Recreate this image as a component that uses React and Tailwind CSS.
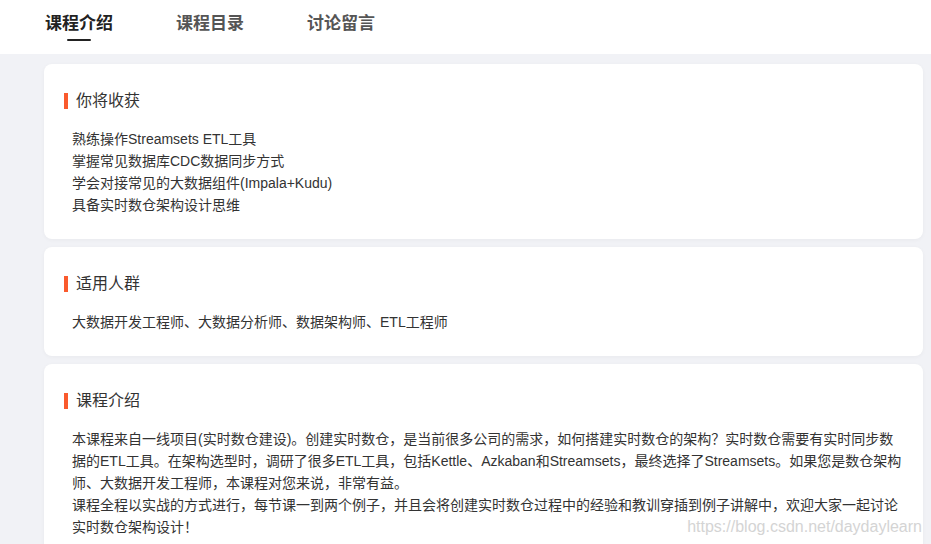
import React from 'react';

const tabs = ['课程介绍', '课程目录', '讨论留言'];

const gains = [
  '熟练操作Streamsets ETL工具',
  '掌握常见数据库CDC数据同步方式',
  '学会对接常见的大数据组件(Impala+Kudu)',
  '具备实时数仓架构设计思维',
];

const Section = ({ title, children }) => (
  <section className="bg-white rounded-lg pl-5 pr-5 pt-[26px] pb-[23px] shadow-[0_1px_4px_rgba(0,0,0,0.04)]">
    <div className="flex items-center h-[22px]">
      <span className="w-1 h-4 bg-[#fa5a2d]" />
      <h3 className="ml-2 text-[16px] leading-[22px] text-[#333]">{title}</h3>
    </div>
    <div className="mt-4 pl-2 text-[14px] leading-[22px] text-[#333]">{children}</div>
  </section>
);

export default function App() {
  return (
    <div
      className="relative h-[544px] overflow-hidden bg-[#f1f2f6]"
      style={{ fontFamily: '"Liberation Sans", "Noto Sans CJK SC", sans-serif' }}
    >
      <header className="h-[54px] bg-white flex items-start pl-[45px] gap-[63px]">
        {tabs.map((t, i) => (
          <div key={t} className="flex flex-col items-center pt-[13px]">
            <span className={`text-[17px] leading-[22px] font-bold ${i === 0 ? 'text-[#222]' : 'text-[#555]'}`}>{t}</span>
            {i === 0 && <span className="mt-[4px] w-6 h-[2px] bg-[#222] rounded" />}
          </div>
        ))}
      </header>

      <main className="pl-[44px] pr-[8px] pt-[10px] flex flex-col gap-2">
        <Section title="你将收获">
          {gains.map((g) => (
            <p key={g}>{g}</p>
          ))}
        </Section>
        <Section title="适用人群">
          <p>大数据开发工程师、大数据分析师、数据架构师、ETL工程师</p>
        </Section>
        <Section title="课程介绍">
          <p>
            本课程来自一线项目(实时数仓建设)。创建实时数仓，是当前很多公司的需求，如何搭建实时数仓的架构？实时数仓需要有实时同步数据的ETL工具。在架构选型时，调研了很多ETL工具，包括Kettle、Azkaban和Streamsets，最终选择了Streamsets。如果您是数仓架构师、大数据开发工程师，本课程对您来说，非常有益。
          </p>
          <p>
            课程全程以实战的方式进行，每节课一到两个例子，并且会将创建实时数仓过程中的经验和教训穿插到例子讲解中，欢迎大家一起讨论实时数仓架构设计！
          </p>
        </Section>
      </main>

      <span className="absolute right-[9px] bottom-[8px] text-[16px] leading-[18px] text-[#d4d4d4]">
        https://blog.csdn.net/daydaylearn
      </span>
    </div>
  );
}
